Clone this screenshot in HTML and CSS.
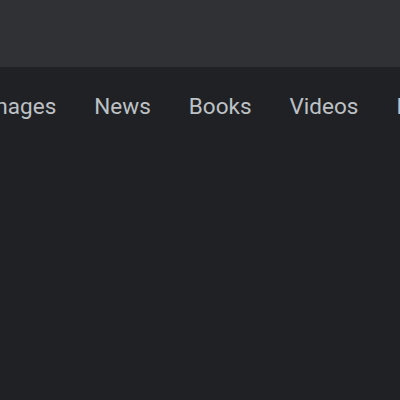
FILE: index.html
```html
<!DOCTYPE html>
<html>
<head>
  <meta charset="UTF-8">
  <title>Search</title>
  <link rel="stylesheet" href="styles.css">
</head>
<body>
<div class="header"></div>
<div class="tabs">
  <a class="tab" href="#">Images</a>
  <a class="tab" href="#">News</a>
  <a class="tab" href="#">Books</a>
  <a class="tab" href="#">Videos</a>
  <a class="tab" href="#">Maps</a>
</div>
<div class="results"></div>
</body>
</html>
```

FILE: styles.css
```css
* {
  margin: 0;
  padding: 0;
}
html, body {
  height: 100%;
  overflow: hidden;
}
body {
  background-color: #202124;
  font-family: Roboto, "Open Sans", sans-serif;
}
a {
  text-decoration: none;
}
.header {
  height: 67px;
  background-color: #303134;
}
.tabs {
  display: flex;
  gap: 38px;
  margin-left: -18px;
  padding-top: 24px;
  white-space: nowrap;
}
.tab {
  color: #bdc1c6;
  font-size: 22.5px;
  line-height: 30px;
}
```
